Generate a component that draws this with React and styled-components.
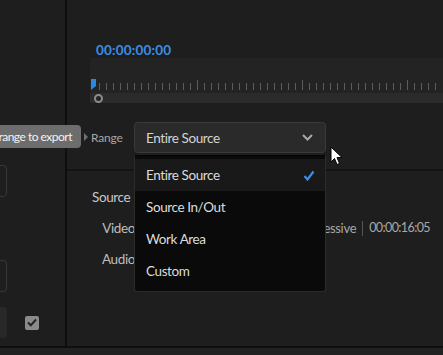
import styled, { createGlobalStyle } from "styled-components";

const GlobalStyle = createGlobalStyle`
  html, body {
    margin: 0;
    padding: 0;
    background: #1e1e1e;
    overflow: hidden;
  }
  * { box-sizing: border-box; }
`;

const FONT = `Lato, "Noto Sans", sans-serif`;

const menuItems = ["Entire Source", "Source In/Out", "Work Area", "Custom"];

function Ruler() {
  const ticks = [];
  for (let k = 1; k < 50; k++) {
    const x = 2 + k * 7 + 0.5;
    const major = k % 15 === 0;
    ticks.push(
      <line key={k} x1={x} x2={x} y1={major ? 1 : 4} y2={11} stroke="#5c5c5c" strokeWidth="1" />
    );
  }
  return (
    <svg width="353" height="12" style={{ display: "block" }}>
      {ticks}
      <path d="M1 0 H6 V7 L1 11 Z" fill="#2f86de" />
    </svg>
  );
}

function Chevron() {
  return (
    <svg width="11" height="7" viewBox="0 0 11 7">
      <path d="M1 1 L5.5 5.5 L10 1" fill="none" stroke="#a8a8a8" strokeWidth="2" />
    </svg>
  );
}

function Check() {
  return (
    <svg width="12" height="11" viewBox="0 0 12 11">
      <path d="M1.5 6 L4.5 9.5 L10.5 1.5" fill="none" stroke="#3b8ee8" strokeWidth="2.2" />
    </svg>
  );
}

function Pointer() {
  return (
    <svg width="13" height="20" viewBox="0 0 13 20">
      <path
        d="M1 1 L1 16 L4.5 12.5 L7 18.5 L9.5 17.5 L7 11.5 L12 11.5 Z"
        fill="#fff"
        stroke="#000"
        strokeWidth="1"
        strokeLinejoin="round"
      />
    </svg>
  );
}

export default function App() {
  return (
    <Frame>
      <GlobalStyle />
      <Main>
        <LeftPanel>
          <FieldBox />
          <FieldBox $gap={63} />
          <CheckRow>
            <FilledBox />
            <CheckBox>
              <svg width="10" height="9" viewBox="0 0 10 9">
                <path d="M1 4.5 L3.8 7.3 L9 1.5" fill="none" stroke="#222" strokeWidth="2" />
              </svg>
            </CheckBox>
          </CheckRow>
        </LeftPanel>
        <VDivider />
        <RightPanel>
          <Timecode>00:00:00:00</Timecode>
          <Timeline>
            <RulerWrap>
              <Ruler />
            </RulerWrap>
            <ScrubBar>
              <Knob />
            </ScrubBar>
          </Timeline>
          <RangeRow>
            <RangeLabel>Range</RangeLabel>
            <SelectWrap>
              <Select>
                <span>Entire Source</span>
                <Chevron />
              </Select>
              <Menu>
                {menuItems.map((item, i) => (
                  <MenuItem key={item} $active={i === 0}>
                    <span>{item}</span>
                    {i === 0 && <Check />}
                  </MenuItem>
                ))}
              </Menu>
            </SelectWrap>
          </RangeRow>
          <HLine />
          <SourceSection>
            <SectionTitle>Source</SectionTitle>
            <InfoRow>
              <InfoLabel>Video</InfoLabel>
              <InfoValue $end>
                1920 x 1080 (1.0), 29.97 fps, Progressive
                <Sep />
                <Duration>00:00:16:05</Duration>
              </InfoValue>
            </InfoRow>
            <InfoRow>
              <InfoLabel>Audio</InfoLabel>
              <InfoValue>48000 Hz</InfoValue>
            </InfoRow>
          </SourceSection>
        </RightPanel>
      </Main>
      <BottomLine />
      <Footer />

      <Tooltip>range to export</Tooltip>
      <TooltipTail />
      <Cursor>
        <Pointer />
      </Cursor>
    </Frame>
  );
}

const Frame = styled.div`
  position: relative;
  width: 443px;
  height: 355px;
  display: flex;
  flex-direction: column;
  overflow: hidden;
  background: #1e1e1e;
  font-family: ${FONT};
`;

const Main = styled.div`
  height: 346px;
  flex-shrink: 0;
  display: flex;
`;

const LeftPanel = styled.div`
  width: 65px;
  flex-shrink: 0;
  padding-top: 165px;
  display: flex;
  flex-direction: column;
`;

const FieldBox = styled.div`
  margin-left: -20px;
  margin-top: ${(p) => p.$gap || 0}px;
  width: 27px;
  height: 32px;
  border: 1px solid #383838;
  border-radius: 4px;
`;

const CheckRow = styled.div`
  margin-top: 15px;
  display: flex;
  align-items: center;
  gap: 18px;
`;

const FilledBox = styled.div`
  margin-left: -20px;
  width: 27px;
  height: 31px;
  background: #282828;
  border-radius: 4px;
`;

const CheckBox = styled.div`
  width: 14px;
  height: 14px;
  border-radius: 2px;
  background: #8a8a8a;
  display: flex;
  align-items: center;
  justify-content: center;
`;

const VDivider = styled.div`
  width: 2px;
  flex-shrink: 0;
  background: #0e0e0e;
`;

const RightPanel = styled.div`
  flex: 1;
  min-width: 0;
  padding-top: 42px;
  display: flex;
  flex-direction: column;
`;

const Timecode = styled.div`
  margin-left: 29px;
  height: 16px;
  font-size: 13.5px;
  font-weight: 700;
  line-height: 16px;
  color: #3a8ee6;
  letter-spacing: 0.2px;
`;

const Timeline = styled.div`
  margin-left: 23px;
  height: 45px;
  background: #232323;
  display: flex;
  flex-direction: column;
  justify-content: flex-end;
`;

const RulerWrap = styled.div`
  height: 14px;
`;

const ScrubBar = styled.div`
  height: 10px;
  background: #2b2b2b;
  position: relative;
`;

const Knob = styled.div`
  position: absolute;
  left: 4px;
  top: 1px;
  width: 9px;
  height: 9px;
  border-radius: 50%;
  border: 2px solid #8c8c8c;
  background: #232323;
`;

const RangeRow = styled.div`
  margin-top: 19px;
  height: 31px;
  display: flex;
  align-items: center;
`;

const RangeLabel = styled.div`
  width: 67px;
  padding-left: 24px;
  font-size: 12px;
  letter-spacing: -0.2px;
  color: #a6a6a6;
`;

const SelectWrap = styled.div`
  position: relative;
  width: 192px;
  height: 31px;
`;

const Select = styled.div`
  height: 100%;
  background: #2a2a2a;
  border: 1px solid #3a3a3a;
  border-radius: 4px;
  display: flex;
  align-items: center;
  justify-content: space-between;
  padding: 0 12px 0 11px;
  font-size: 13.5px;
  letter-spacing: -0.4px;
  color: #d4d4d4;
`;

const Menu = styled.div`
  position: absolute;
  top: 33px;
  left: 0;
  width: 192px;
  height: 137px;
  padding-top: 3px;
  background: #0a0a0a;
  border: 1px solid #2c2c2c;
  border-top-color: #050505;
  border-radius: 0 0 3px 3px;
  z-index: 2;
`;

const MenuItem = styled.div`
  height: 32px;
  display: flex;
  align-items: center;
  justify-content: space-between;
  padding: 0 10px 0 11px;
  font-size: 13.5px;
  letter-spacing: -0.4px;
  color: #dcdcdc;
  background: ${(p) => (p.$active ? "#191919" : "transparent")};
`;

const HLine = styled.div`
  margin-top: 16px;
  height: 2px;
  background: #141414;
`;

const SourceSection = styled.div`
  padding-top: 18px;
  display: flex;
  flex-direction: column;
`;

const SectionTitle = styled.div`
  margin-left: 25px;
  height: 16px;
  line-height: 16px;
  font-size: 13.5px;
  letter-spacing: -0.4px;
  color: #c8c8c8;
`;

const InfoRow = styled.div`
  margin-top: 15px;
  height: 16px;
  display: flex;
  align-items: center;
  font-size: 13.5px;
  letter-spacing: -0.4px;
  line-height: 16px;
`;

const InfoLabel = styled.div`
  width: 68px;
  flex-shrink: 0;
  text-align: right;
  color: #bdbdbd;
`;

const InfoValue = styled.div`
  flex: 1;
  min-width: 0;
  overflow: hidden;
  display: flex;
  justify-content: ${(p) => (p.$end ? "flex-end" : "flex-start")};
  align-items: center;
  white-space: nowrap;
  padding-right: 13px;
  font-size: 13px;
  letter-spacing: -0.3px;
  color: #a8a8a8;
`;

const Duration = styled.span`
  font-size: 12.5px;
  letter-spacing: -0.6px;
`;

const Sep = styled.span`
  display: inline-block;
  flex-shrink: 0;
  width: 1px;
  height: 15px;
  background: #555;
  margin: 0 6px;
`;

const BottomLine = styled.div`
  height: 2px;
  flex-shrink: 0;
  background: #0e0e0e;
`;

const Footer = styled.div`
  flex: 1;
  background: #222222;
`;

const Tooltip = styled.div`
  position: absolute;
  right: 362px;
  top: 125px;
  height: 23px;
  padding: 0 9px 0 10px;
  border-radius: 4px;
  background: #6d6d6d;
  color: #f2f2f2;
  font-size: 12px;
  letter-spacing: -0.5px;
  line-height: 23px;
  white-space: nowrap;
`;

const TooltipTail = styled.div`
  position: absolute;
  left: 84px;
  top: 133px;
  width: 0;
  height: 0;
  border-top: 4px solid transparent;
  border-bottom: 4px solid transparent;
  border-left: 4px solid #707070;
`;

const Cursor = styled.div`
  position: absolute;
  left: 330px;
  top: 146px;
  z-index: 3;
  line-height: 0;
`;
